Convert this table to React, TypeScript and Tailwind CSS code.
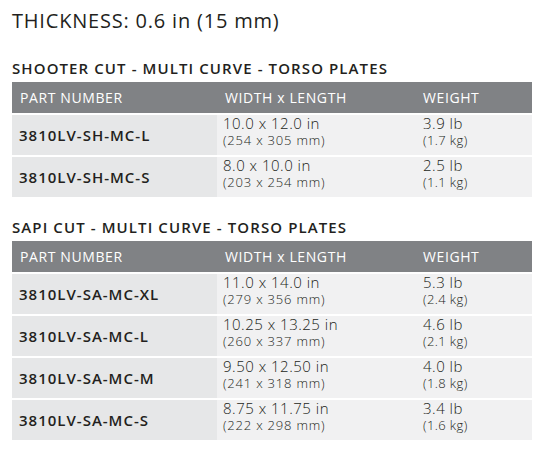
import React from "react";

type Row = { part: string; dim: string; dimMm: string; wt: string; wtKg: string };

const shooter: Row[] = [
  { part: "3810LV-SH-MC-L", dim: "10.0 x 12.0 in", dimMm: "(254 x 305 mm)", wt: "3.9 lb", wtKg: "(1.7 kg)" },
  { part: "3810LV-SH-MC-S", dim: "8.0 x 10.0 in", dimMm: "(203 x 254 mm)", wt: "2.5 lb", wtKg: "(1.1 kg)" },
];

const sapi: Row[] = [
  { part: "3810LV-SA-MC-XL", dim: "11.0 x 14.0 in", dimMm: "(279 x 356 mm)", wt: "5.3 lb", wtKg: "(2.4 kg)" },
  { part: "3810LV-SA-MC-L", dim: "10.25 x 13.25 in", dimMm: "(260 x 337 mm)", wt: "4.6 lb", wtKg: "(2.1 kg)" },
  { part: "3810LV-SA-MC-M", dim: "9.50 x 12.50 in", dimMm: "(241 x 318 mm)", wt: "4.0 lb", wtKg: "(1.8 kg)" },
  { part: "3810LV-SA-MC-S", dim: "8.75 x 11.75 in", dimMm: "(222 x 298 mm)", wt: "3.4 lb", wtKg: "(1.6 kg)" },
];

function SpecTable({ title, rows, className }: { title: string; rows: Row[]; className?: string }) {
  return (
    <section className={className}>
      <h2 className="text-[15px] leading-[20px] font-semibold tracking-[1.1px] text-[#231f20]">{title}</h2>
      <div className="mt-[4px] w-[520px] flex flex-col gap-[2px] bg-white">
        <div className="grid grid-cols-[205px_198px_117px] h-[31px] items-center bg-[#808285] text-white text-[14px] tracking-[0.6px]">
          <div className="pl-[8px]">PART NUMBER</div>
          <div className="pl-[8px]">WIDTH x LENGTH</div>
          <div className="pl-[8px]">WEIGHT</div>
        </div>
        {rows.map((r) => (
          <div key={r.part} className="grid grid-cols-[205px_198px_117px] h-[40px] text-[#231f20]">
            <div className="bg-[#e6e7e8] flex items-center pl-[7px] pb-[1px] text-[15px] leading-[20px] font-semibold tracking-[1px]">
              {r.part}
            </div>
            <div className="bg-[#f1f1f2] pl-[6px]">
              <div className="text-[15px] leading-[17px] font-light tracking-[0.5px]">{r.dim}</div>
              <div className="text-[13px] leading-[16px] font-light tracking-[0.8px]">{r.dimMm}</div>
            </div>
            <div className="bg-[#f1f1f2] pl-[8px]">
              <div className="text-[15px] leading-[17px] font-light tracking-[0.5px]">{r.wt}</div>
              <div className="text-[13px] leading-[16px] font-light tracking-[0.4px]">{r.wtKg}</div>
            </div>
          </div>
        ))}
      </div>
    </section>
  );
}

export default function App() {
  return (
    <div
      className="w-[549px] h-[462px] bg-white pl-[12px] pt-[7px] overflow-hidden"
      style={{ fontFamily: '"Open Sans", "Liberation Sans", sans-serif' }}
    >
      <h1 className="text-[20px] leading-[28px] font-medium tracking-[0.8px] text-[#231f20]">THICKNESS: 0.6 in (15 mm)</h1>
      <SpecTable className="mt-[23px]" title="SHOOTER CUT - MULTI CURVE - TORSO PLATES" rows={shooter} />
      <SpecTable className="mt-[20px]" title="SAPI CUT - MULTI CURVE - TORSO PLATES" rows={sapi} />
    </div>
  );
}
